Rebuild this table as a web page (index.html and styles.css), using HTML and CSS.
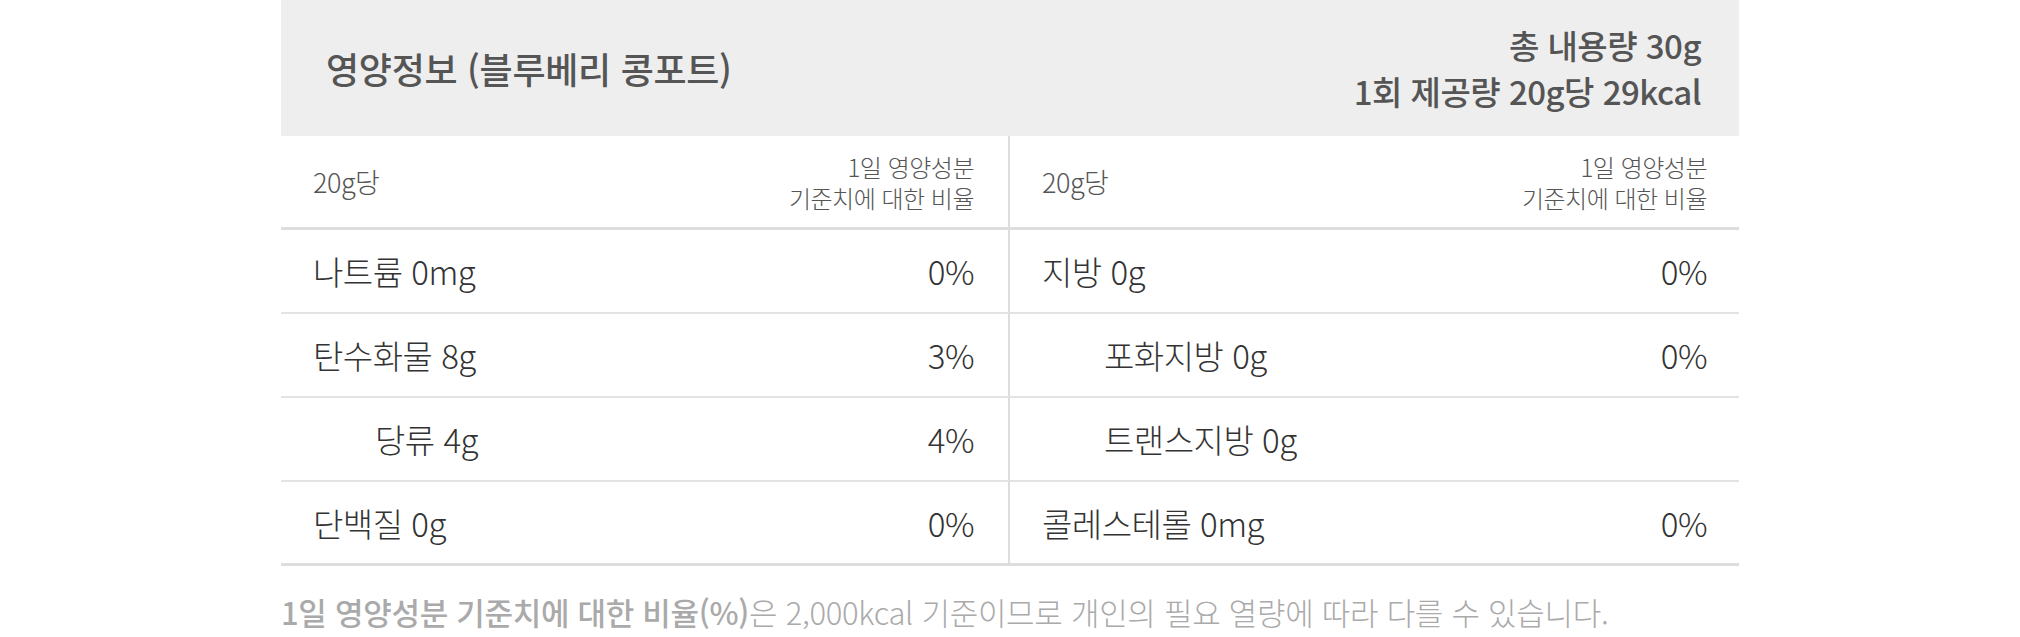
FILE: index.html
```html
<!DOCTYPE html>
<html lang="ko">
<head>
<meta charset="utf-8">
<title>영양정보</title>
<link rel="stylesheet" href="styles.css">
</head>
<body>
<div class="nutrition">
  <div class="head">
    <div class="title">영양정보 (블루베리 콩포트)</div>
    <div class="amount">
      <div>총 내용량 30g</div>
      <div>1회 제공량 20g당 29kcal</div>
    </div>
  </div>
  <div class="grid">
    <div class="cell sub left"><span>20g당</span><span class="ratio">1일 영양성분<br>기준치에 대한 비율</span></div>
    <div class="cell sub"><span>20g당</span><span class="ratio">1일 영양성분<br>기준치에 대한 비율</span></div>

    <div class="cell left"><span>나트륨 0mg</span><span>0%</span></div>
    <div class="cell"><span>지방 0g</span><span>0%</span></div>

    <div class="cell left"><span>탄수화물 8g</span><span>3%</span></div>
    <div class="cell"><span class="indent">포화지방 0g</span><span>0%</span></div>

    <div class="cell left"><span class="indent">당류 4g</span><span>4%</span></div>
    <div class="cell"><span class="indent">트랜스지방 0g</span><span></span></div>

    <div class="cell left last"><span>단백질 0g</span><span>0%</span></div>
    <div class="cell last"><span>콜레스테롤 0mg</span><span>0%</span></div>
  </div>
  <p class="note"><strong>1일 영양성분 기준치에 대한 비율(%)</strong>은 2,000kcal 기준이므로 개인의 필요 열량에 따라 다를 수 있습니다.</p>
</div>
</body>
</html>
```
FILE: styles.css
```css
html, body {
  margin: 0;
  padding: 0;
  background: #ffffff;
}
body {
  font-family: "Noto Sans CJK KR", "Noto Sans", sans-serif;
}
.nutrition {
  width: 1458px;
  margin: 0 auto;
}
.head {
  height: 136px;
  background: #eeeeee;
  display: flex;
  align-items: center;
  justify-content: space-between;
  padding: 0 38px 0 45px;
  box-sizing: border-box;
  color: #555555;
  font-weight: 500;
}
.title {
  font-size: 36px;
  letter-spacing: -0.3px;
}
.amount {
  font-size: 33px;
  line-height: 46px;
  text-align: right;
  letter-spacing: -0.5px;
}
.grid {
  display: grid;
  grid-template-columns: 1fr 1fr;
}
.cell {
  display: flex;
  justify-content: space-between;
  align-items: center;
  height: 84px;
  box-sizing: border-box;
  padding: 0 32px;
  border-bottom: 2px solid #e3e3e3;
  font-size: 33px;
  font-weight: 300;
  color: #333333;
  letter-spacing: -0.5px;
}
.cell.left {
  border-right: 2px solid #dddddd;
  padding-right: 34px;
}
.cell.sub {
  height: 94px;
  border-bottom: 3px solid #dddddd;
  font-size: 27px;
  color: #555555;
}
.ratio {
  font-size: 24px;
  line-height: 31px;
  text-align: right;
}
.cell.last {
  border-bottom: 3px solid #dddddd;
}
.indent {
  padding-left: 62px;
}
.note {
  margin: 26px 0 0;
  font-size: 31px;
  line-height: 40px;
  font-weight: 300;
  color: #aaaaaa;
  letter-spacing: -0.3px;
}
.note strong {
  font-weight: 500;
}
```
